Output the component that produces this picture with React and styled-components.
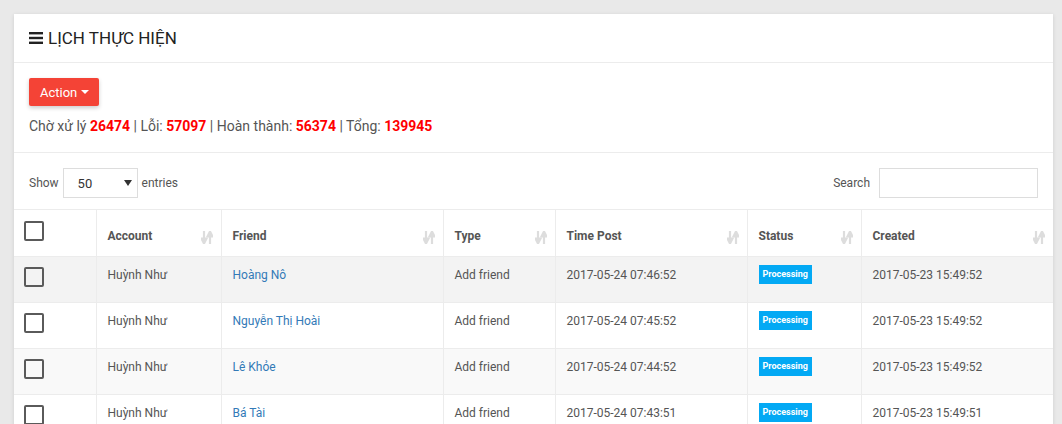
import React from 'react'
import styled, { createGlobalStyle } from 'styled-components'

const GlobalStyle = createGlobalStyle`
  html, body {
    margin: 0;
    padding: 0;
    background: #e9e9e9;
    font-family: Roboto, "Liberation Sans", sans-serif;
    color: #555;
    overflow: hidden;
  }
`

const Page = styled.div`
  padding: 14px 9px 0 14px;
  height: 424px;
  box-sizing: border-box;
`

const Card = styled.div`
  background: #fff;
  box-shadow: 0 1px 4px rgba(0, 0, 0, 0.12);
  height: 430px;
`

const CardHeader = styled.div`
  display: flex;
  align-items: center;
  gap: 5px;
  height: 49px;
  padding: 0 15px;
  border-bottom: 1px solid #ececec;
  box-sizing: border-box;
  font-size: 17px;
  color: #222;
`

const Section = styled.div`
  padding: ${p => p.$pad || '15px'};
  border-bottom: 1px solid #ececec;
`

const ActionButton = styled.button`
  display: inline-flex;
  align-items: center;
  gap: 4px;
  height: 28px;
  padding: 0 10px 0 11px;
  border: none;
  border-radius: 2px;
  background: #f44336;
  color: #fff;
  font-family: inherit;
  font-size: 13px;
  box-shadow: 0 2px 4px rgba(0, 0, 0, 0.2);
`

const Caret = styled.span`
  border-left: 4px solid transparent;
  border-right: 4px solid transparent;
  border-top: 4px solid #fff;
`

const Stats = styled.div`
  margin-top: 12px;
  font-size: 14px;
  color: #555;
  b {
    color: #f00;
    font-weight: 700;
  }
`

const ToolRow = styled.div`
  display: flex;
  justify-content: space-between;
  align-items: center;
  padding: 15px 15px 11px 15px;
  font-size: 12px;
  color: #555;
`

const Group = styled.label`
  display: flex;
  align-items: center;
  gap: 4px;
`

const FakeSelect = styled.div`
  width: 75px;
  height: 30px;
  box-sizing: border-box;
  border: 1px solid #ddd;
  display: flex;
  align-items: center;
  justify-content: space-between;
  padding: 0 5px 0 14px;
  font-size: 13px;
  color: #333;
`

const SearchBox = styled.input`
  width: 159px;
  height: 30px;
  box-sizing: border-box;
  border: 1px solid #ddd;
  margin-left: 5px;
  outline: none;
`

const Table = styled.table`
  width: 100%;
  border-collapse: collapse;
  table-layout: fixed;
  font-size: 12px;
`

const Th = styled.th`
  position: relative;
  height: 47px;
  box-sizing: border-box;
  padding: 0 11px 13px;
  vertical-align: bottom;
  text-align: left;
  font-weight: 700;
  line-height: 14px;
  color: #555;
  border-top: 1px solid #ececec;
  border-left: 1px solid #ececec;
  &:first-child {
    border-left: none;
    vertical-align: top;
    padding: 11px 10px 0;
  }
`

const Sort = styled.svg`
  position: absolute;
  right: 8px;
  bottom: 12px;
`

const Tr = styled.tr`
  background: ${p => p.$bg};
`

const Td = styled.td`
  height: 46px;
  box-sizing: border-box;
  padding: 11px 11px 0;
  vertical-align: top;
  color: #555;
  border-top: 1px solid #ececec;
  border-left: 1px solid #ececec;
  line-height: 14px;
  &:first-child {
    border-left: none;
    padding: 10px 10px 0;
  }
`

const Box = styled.span`
  display: block;
  width: 20px;
  height: 20px;
  box-sizing: border-box;
  border: 2px solid #5a5a5a;
  border-radius: 2px;
`

const FriendLink = styled.a`
  color: #337ab7;
  text-decoration: none;
`

const Badge = styled.span`
  display: inline-block;
  background: #03a9f4;
  color: #fff;
  font-size: 9px;
  font-weight: 700;
  padding: 2px 4px 3px;
  margin-top: -3px;
  vertical-align: top;
`

const MenuIcon = () => (
  <svg width="14" height="12" viewBox="0 0 14 12">
    <rect x="0" y="0" width="14" height="2.4" fill="#222" />
    <rect x="0" y="4.8" width="14" height="2.4" fill="#222" />
    <rect x="0" y="9.6" width="14" height="2.4" fill="#222" />
  </svg>
)

const SortIcon = () => (
  <Sort width="12" height="13" viewBox="0 0 12 13">
    <path d="M3 0v8M0.5 7.5L3 12.5l2.5-5z" stroke="#ddd" strokeWidth="2.2" fill="#ddd" />
    <path d="M9 13V5M6.5 5.5L9 0.5l2.5 5z" stroke="#ddd" strokeWidth="2.2" fill="#ddd" />
  </Sort>
)

const columns = [
  { title: '', width: 82 },
  { title: 'Account', width: 125 },
  { title: 'Friend', width: 222 },
  { title: 'Type', width: 112 },
  { title: 'Time Post', width: 192 },
  { title: 'Status', width: 114 },
  { title: 'Created', width: 192 },
]

const rows = [
  { friend: 'Hoàng Nô', post: '2017-05-24 07:46:52', created: '2017-05-23 15:49:52', bg: '#f3f3f3' },
  { friend: 'Nguyễn Thị Hoài', post: '2017-05-24 07:45:52', created: '2017-05-23 15:49:52', bg: '#fff' },
  { friend: 'Lê Khỏe', post: '2017-05-24 07:44:52', created: '2017-05-23 15:49:52', bg: '#f9f9f9' },
  { friend: 'Bá Tài', post: '2017-05-24 07:43:51', created: '2017-05-23 15:49:51', bg: '#fff' },
]

export default function App() {
  return (
    <>
      <GlobalStyle />
      <Page>
        <Card>
          <CardHeader>
            <MenuIcon />
            LỊCH THỰC HIỆN
          </CardHeader>
          <Section $pad="15px 15px 18px">
            <ActionButton>
              Action <Caret />
            </ActionButton>
            <Stats>
              Chờ xử lý <b>26474</b> | Lỗi: <b>57097</b> | Hoàn thành: <b>56374</b> | Tổng: <b>139945</b>
            </Stats>
          </Section>
          <ToolRow>
            <Group>
              Show
              <FakeSelect>
                50
                <svg width="8" height="6" viewBox="0 0 8 6"><path d="M0 0h8L4 6z" fill="#333" /></svg>
              </FakeSelect>
              entries
            </Group>
            <Group>
              Search
              <SearchBox />
            </Group>
          </ToolRow>
          <Table>
            <colgroup>
              {columns.map((c, i) => <col key={i} style={{ width: c.width }} />)}
            </colgroup>
            <thead>
              <tr>
                {columns.map((c, i) => (
                  <Th key={i}>
                    {i === 0 ? <Box /> : c.title}
                    {i > 0 && <SortIcon />}
                  </Th>
                ))}
              </tr>
            </thead>
            <tbody>
              {rows.map((r, i) => (
                <Tr key={i} $bg={r.bg}>
                  <Td><Box /></Td>
                  <Td>Huỳnh Như</Td>
                  <Td><FriendLink href="#">{r.friend}</FriendLink></Td>
                  <Td>Add friend</Td>
                  <Td>{r.post}</Td>
                  <Td><Badge>Processing</Badge></Td>
                  <Td>{r.created}</Td>
                </Tr>
              ))}
            </tbody>
          </Table>
        </Card>
      </Page>
    </>
  )
}
